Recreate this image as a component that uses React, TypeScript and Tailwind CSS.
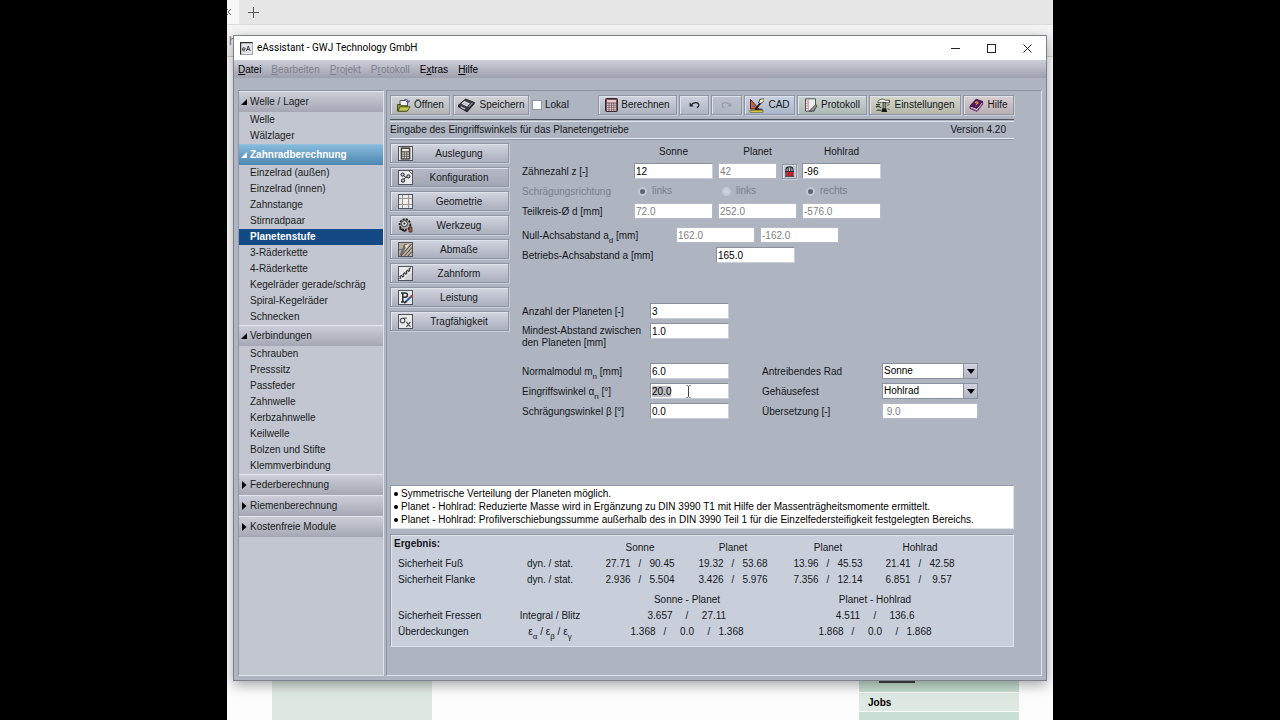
import type { ReactNode } from 'react'
import clsx from 'clsx'

const bevel = 'border border-[#8f95a3] shadow-[inset_1px_1px_0_#dfe3ec,1px_1px_0_#c9cedb]'

/* ---------- toolbar icons ---------- */

function OpenIcon() {
  return (
    <svg width="15" height="15" viewBox="0 0 15 15">
      <path d="M4 2.5h5.5l2 2V10H4z" fill="#eef0f4" stroke="#30343c" strokeWidth=".8" />
      <path d="M1.5 6.5h3l1 1.2H11V13H1.5z" fill="#8a8d2e" stroke="#2f310c" strokeWidth=".8" />
      <path d="M1.7 13.2l2.6-4.4h9.8l-2.8 4.4z" fill="#c3c658" stroke="#3a3c10" strokeWidth=".8" />
      <path d="M8 2.2c1.6-1.6 3.8-1 4.4 1.3M11 3l1.5 1.3L13.7 2.6" fill="none" stroke="#2f3bb0" strokeWidth="1" />
    </svg>
  )
}

function SaveIcon() {
  return (
    <svg width="19" height="15" viewBox="0 0 19 15">
      <path d="M1 7.5L8.5 1l9 3.5L10 13.5z" fill="#3b3d45" stroke="#15161a" strokeWidth=".8" />
      <path d="M1 7.5v1.6l9 5.2 7.5-8.4V4.5L10 13z" fill="#1c1d22" />
      <path d="M7.2 3l5.6 2.4-2.8 3-5.6-2.6z" fill="#f2f3f5" />
      <path d="M6.6 4.4l5 2.2M5.8 5.2l5 2.2" stroke="#8f929b" strokeWidth=".6" />
      <path d="M4 8.2l4.4 2.4-1 1.1-4.2-2.4z" fill="#b9bcc6" />
      <path d="M14.8 4.6l1.2.5-3.6 4-1.2-.6z" fill="#84868f" />
    </svg>
  )
}

function CalculatorIcon() {
  return (
    <svg width="13" height="14" viewBox="0 0 13 14">
      <rect x=".5" y=".5" width="12" height="13" rx="1" fill="#6d5158" stroke="#3a2a30" />
      <rect x="2" y="2" width="9" height="2.5" fill="#e9c9cd" />
      {[5.5, 7.6, 9.7, 11.5].map(y =>
        [2, 4.4, 6.8, 9.2].map(x => <rect key={`${x}-${y}`} x={x} y={y} width="1.6" height="1.3" fill="#f3dfe2" />)
      )}
    </svg>
  )
}

function UndoIcon({ flip = false, color }: { flip?: boolean; color: string }) {
  return (
    <svg width="11" height="8" viewBox="0 0 11 8" className={flip ? '-scale-x-100' : ''}>
      <path d="M2 4.2C4 1 9.5.6 9.8 4c.1 1.4-.8 2.2-2 2.6" fill="none" stroke={color} strokeWidth="1.2" />
      <path d="M.6 1.2v4.4h4.2z" fill={color} />
    </svg>
  )
}

function CadIcon() {
  return (
    <svg width="16" height="15" viewBox="0 0 16 15">
      <path d="M1.5 1.5V11h8.5z" fill="#d9652b" stroke="#5a1c10" strokeWidth="1" />
      <path d="M3.2 6v3h3z" fill="#5d6bb4" />
      <path d="M1 12.3h13v2H1z" fill="#e8dc3e" stroke="#4a4210" strokeWidth=".6" />
      <path d="M6.5 11L12 4.5" stroke="#14151a" strokeWidth="1.8" />
      <path d="M9.5 4.8L11 1.2l3.6-.4-.2 2.4-2.6 2.6z" fill="#f1efd2" stroke="#1a1b20" strokeWidth=".8" />
      <path d="M12.6.8l2.4 1.6" stroke="#e0c93a" strokeWidth="1.2" />
      <path d="M6 11.2h7.5" fill="none" stroke="#14151a" strokeWidth="1" />
    </svg>
  )
}

function NotebookIcon() {
  return (
    <svg width="14" height="14" viewBox="0 0 14 14">
      <path d="M1.5.8h10v8.6l-4 3.8h-6z" fill="#e7efe9" stroke="#4d565a" />
      <path d="M4.2 1v12" stroke="#e07a92" />
      <path d="M2.4 3h1M2.4 5.5h1M2.4 8h1M2.4 10.5h1" stroke="#c34b6c" />
      <path d="M5.5 13l6.2-6.4 1.2 1.2-3 5.4z" fill="#8d969b" stroke="#2b3034" strokeWidth=".8" />
    </svg>
  )
}

function ToolsIcon() {
  return (
    <svg width="16" height="15" viewBox="0 0 16 15">
      <path d="M3 3.2C5 .6 9 .8 10 2.2h4.5v2.6H10.5L9 4.4H6.4L3 5z" fill="#f2f2ea" stroke="#34352c" strokeWidth=".8" />
      <path d="M8 4.6h2.6V11H8z" fill="#8d8e82" stroke="#222" strokeWidth=".6" />
      <path d="M7 10.6h4.2l1 3.4H6.4z" fill="#17181a" />
      <path d="M1 6.6h4M1 9.2c2-1.6 3.6-.6 5 .6M1.5 12.6c1.6-1 3-.8 4.4 0" fill="none" stroke="#33342e" strokeWidth="1.1" />
      <path d="M12 7.5l2.4-1M12.6 10.6l2 1" stroke="#55564c" />
    </svg>
  )
}

function BookIcon() {
  return (
    <svg width="15" height="14" viewBox="0 0 15 14">
      <path d="M1 8L7 1.2l6.5 2.2-5.6 7z" fill="#5a1668" stroke="#250a2e" strokeWidth=".8" />
      <path d="M1 8v2.4l7 3 5.8-7.4-.3-2.6-5.6 7z" fill="#f0e6f1" stroke="#250a2e" strokeWidth=".8" />
      <path d="M1.2 9.6l6.8 2.8 5.6-7.2" fill="none" stroke="#7d2d8a" strokeWidth=".7" />
      <path d="M6.2 5c.4-1.6 3-1.4 2.6 0-.2.8-1.4.8-1.6 1.8M6.7 8v.6" fill="none" stroke="#f4a43a" strokeWidth="1.1" />
    </svg>
  )
}

/* ---------- module icons ---------- */

function IconFrame({ children }: { children: ReactNode }) {
  return (
    <svg width="15" height="15" viewBox="0 0 15 15" className="shrink-0">
      <rect x=".5" y=".5" width="14" height="14" fill="#e9eaec" stroke="#50555f" />
      {children}
    </svg>
  )
}

const designIcon = (
  <IconFrame>
    <rect x="3" y="1.8" width="9" height="11.4" fill="#54504c" stroke="#2d2a28" strokeWidth=".6" />
    <rect x="4.2" y="3" width="6.6" height="2.2" fill="#efe9df" />
    {[6.4, 8.6, 10.8].map(y => [4.2, 6.7, 9.2].map(x => <rect key={`${x}-${y}`} x={x} y={y} width="1.6" height="1.4" fill="#e9e2d6" />))}
  </IconFrame>
)

const configIcon = (
  <IconFrame>
    <path d="M11 1l3 3" stroke="#50555f" />
    <circle cx="4.6" cy="4.6" r="1.6" fill="#b9bdc2" stroke="#23262b" />
    <circle cx="10.4" cy="6.4" r="1.6" fill="#b9bdc2" stroke="#23262b" />
    <circle cx="5" cy="10.6" r="1.7" fill="#b9bdc2" stroke="#23262b" />
    <path d="M6 5.8l1.6 1.6 1.4-.4M7.6 7.4L6.2 9.2" fill="none" stroke="#23262b" />
  </IconFrame>
)

const geometryIcon = (
  <IconFrame>
    <path d="M4.5 1v13M10.5 1v13M1 4.5h13M1 10.5h13" stroke="#9a948c" />
    <rect x="5" y="5" width="5" height="5" fill="#f6f1ea" />
  </IconFrame>
)

const toolIcon = (
  <svg width="15" height="15" viewBox="0 0 15 15" className="shrink-0">
    <circle cx="7" cy="6.6" r="5.4" fill="#a9a7a4" stroke="#1e1e20" strokeWidth="1.8" strokeDasharray="2 1.2" />
    <circle cx="6.4" cy="5.6" r="3" fill="#dcdad6" stroke="#3a3a3d" />
    <circle cx="6.4" cy="5.6" r="1" fill="#26262a" />
    <path d="M1.5 10.5l6 3" stroke="#202024" strokeWidth="1.4" />
    <path d="M11 9h3v5h-3z" fill="#a05a4a" stroke="#3c1b16" strokeWidth=".7" />
  </svg>
)

const allowanceIcon = (
  <IconFrame>
    <rect x="1" y="1" width="13" height="13" fill="#b9b0a2" />
    <path d="M1.5 13.5L6 2h3L4 13.5z" fill="#756b60" />
    <path d="M3 14L13.5 2M6.5 14L14 5.5M10 14l4-4.5" stroke="#494541" />
    <path d="M7 3.2l4-.8-3 4.2z" fill="#ece5d8" />
    <path d="M1 7.5h3" stroke="#5f7fa8" strokeWidth="1.4" />
  </IconFrame>
)

const toothIcon = (
  <IconFrame>
    <path
      d="M1.5 12.5l1-.4-.4-1.8 1.5-.8 1 1.3 1.2-.8-.6-1.7L6.6 7l1.2 1.2 1-1-.6-1.6 1.2-1.2 1.4.9.9-1.1-.6-1.2 1.6-1.2"
      fill="none"
      stroke="#44474d"
      strokeWidth="1.3"
    />
    <path d="M6.5 14c.6-3.4 3-6 7.5-7v7z" fill="#d3d5da" />
  </IconFrame>
)

const powerIcon = (
  <IconFrame>
    <path d="M3 3h4.2c3 0 3 4.2 0 4.2H5.4M4.8 3v9M3 12h3.6" fill="none" stroke="#2b2e33" strokeWidth="1.5" />
    <path d="M7.6 12L13 6.6" stroke="#2f6aa8" strokeWidth="2.2" />
    <path d="M12.4 7.2l1.8-1.8" stroke="#c23a3a" strokeWidth="2.2" />
    <path d="M6.4 13.2l1.6-1.6" stroke="#151619" strokeWidth="1.4" />
  </IconFrame>
)

const loadIcon = (
  <IconFrame>
    <circle cx="4.6" cy="6.6" r="2.3" fill="none" stroke="#4b4e55" strokeWidth="1.1" />
    <path d="M4.4 4.2h4.4" stroke="#4b4e55" strokeWidth="1.1" />
    <path d="M8.4 7.8l4 5M12.4 7.8l-4 5" stroke="#4b4e55" strokeWidth="1.1" />
  </IconFrame>
)

/* ---------- browser behind the window ---------- */

function BrowserBackdrop() {
  return (
    <div className="flex h-full flex-col bg-[#fdfdfd]">
      <div className="flex h-[25px] border-b border-[#dcdcdc] bg-[#e6e6e6]">
        <div className="flex w-[12px] items-center bg-[#f7f7f7]">
          <svg width="5" height="8" viewBox="0 0 5 8">
            <path d="M0 1l1 1M0 7l1-1M4 1L1 4l3 3" fill="none" stroke="#555" />
          </svg>
        </div>
        <svg width="11" height="11" viewBox="0 0 11 11" className="ml-[9px] mt-[7px]">
          <path d="M5.5 0v11M0 5.5h11" stroke="#555" />
        </svg>
      </div>
      <div className="h-[32px] border-b border-[#d0d0d0] bg-[#f4f4f4] pl-[2px] pt-[10px] text-[12px] text-[#777]">h</div>
      <div className="flex flex-1 justify-between pl-[45px] pr-[34px]">
        <div className="w-[160px] bg-[#dfe9e3]" />
        <div className="flex w-[160px] flex-col justify-end">
          <div className="h-[40px] bg-[#c8dfd3] px-[20px] pt-[29px]">
            <div className="h-[2px] w-[36px] bg-[#444]" />
          </div>
          <a href="#jobs" className="mt-px flex h-[18px] items-center bg-[#dfe9e3] px-[9px] pt-[2px] font-bold text-black">Jobs</a>
          <div className="mt-px h-[8px] bg-[#c8dfd3]" />
        </div>
      </div>
    </div>
  )
}

/* ---------- window frame ---------- */

function TitleBar() {
  return (
    <div className="flex h-[24px] items-center bg-white pl-[6px] pr-px font-[Roboto,sans-serif] text-[10px]">
      <svg width="13" height="13" viewBox="0 0 13 13">
        <rect x=".5" y=".5" width="12" height="12" fill="#e4e5ea" stroke="#a3a6ad" />
        <path d="M.5 12.5V.5h12" fill="none" stroke="#2c2d31" strokeWidth="1.4" />
        <path d="M2.5 7.2h2.6c0-2.4-2.6-2.2-2.6 0s1.8 2 2.6 1.2M6.4 9l1.9-5 1.9 5M7 7.4h2.6" fill="none" stroke="#2c2d31" strokeWidth=".9" />
      </svg>
      <span className="ml-[4px] text-black">eAssistant - GWJ Technology GmbH</span>
      <div className="ml-auto flex">
        <button aria-label="Minimieren" className="flex h-[24px] w-[36px] items-center justify-center">
          <svg width="9" height="9" viewBox="0 0 9 9"><path d="M0 4.5h9" stroke="#222" /></svg>
        </button>
        <button aria-label="Maximieren" className="flex h-[24px] w-[36px] items-center justify-center">
          <svg width="9" height="9" viewBox="0 0 9 9"><rect x=".5" y=".5" width="8" height="8" fill="none" stroke="#222" /></svg>
        </button>
        <button aria-label="Schließen" className="flex h-[24px] w-[36px] items-center justify-center">
          <svg width="9" height="9" viewBox="0 0 9 9"><path d="M.5.5l8 8M8.5.5l-8 8" stroke="#222" /></svg>
        </button>
      </div>
    </div>
  )
}

function MenuBar() {
  const items = [
    { pre: '', key: 'D', rest: 'atei', disabled: false },
    { pre: '', key: 'B', rest: 'earbeiten', disabled: true },
    { pre: '', key: 'P', rest: 'rojekt', disabled: true },
    { pre: 'P', key: 'r', rest: 'otokoll', disabled: true },
    { pre: 'E', key: 'x', rest: 'tras', disabled: false },
    { pre: '', key: 'H', rest: 'ilfe', disabled: false },
  ]
  return (
    <div className="flex h-[18px] items-center gap-[10px] bg-linear-to-b from-[#cdcfda] to-[#9da1ad] px-[4px] pt-px">
      {items.map(m => (
        <button key={m.rest} disabled={m.disabled} className="text-black disabled:text-[#7c808b]">
          {m.pre}<u>{m.key}</u>{m.rest}
        </button>
      ))}
    </div>
  )
}

/* ---------- module tree ---------- */

const tree = [
  { title: 'Welle / Lager', items: ['Welle', 'Wälzlager'] },
  {
    title: 'Zahnradberechnung',
    items: [
      'Einzelrad (außen)', 'Einzelrad (innen)', 'Zahnstange', 'Stirnradpaar', 'Planetenstufe',
      '3-Räderkette', '4-Räderkette', 'Kegelräder gerade/schräg', 'Spiral-Kegelräder', 'Schnecken',
    ],
  },
  {
    title: 'Verbindungen',
    items: ['Schrauben', 'Presssitz', 'Passfeder', 'Zahnwelle', 'Kerbzahnwelle', 'Keilwelle', 'Bolzen und Stifte', 'Klemmverbindung'],
  },
  { title: 'Federberechnung', items: [] },
  { title: 'Riemenberechnung', items: [] },
  { title: 'Kostenfreie Module', items: [] },
]

function Sidebar() {
  return (
    <nav className="w-[146px] shrink-0 border border-[#8f95a3] border-b-[#dfe3ec] border-r-[#dfe3ec] bg-[#c2c6d0]">
      {tree.map(group => {
        const active = group.title === 'Zahnradberechnung'
        return (
          <div key={group.title}>
            <button
              className={clsx(
                'flex h-[21px] w-full items-center gap-[3px] border-t pl-[2px] text-left',
                active
                  ? 'border-[#8fc0de] bg-linear-to-b from-[#86bbdb] to-[#4d87b0] font-bold text-white'
                  : 'border-[#e3e6ee] bg-linear-to-b from-[#cbced8] to-[#a4a8b4] text-[#1a1c22]'
              )}
            >
              <svg width="6" height="8" viewBox="0 0 6 8" fill={active ? '#fff' : '#000'}>
                {group.items.length ? <path d="M6 1v6H0z" /> : <path d="M1 0l4.5 4L1 8z" />}
              </svg>
              {group.title}
            </button>
            {group.items.map(item => (
              <a
                key={item}
                href="#modul"
                className={clsx(
                  'block h-[16px] whitespace-nowrap pl-[11px] leading-[16px]',
                  item === 'Planetenstufe' ? 'bg-[#134a86] font-bold text-white' : 'text-[#1a1c22]'
                )}
              >
                {item}
              </a>
            ))}
          </div>
        )
      })}
    </nav>
  )
}

/* ---------- toolbar ---------- */

function ToolButton({ className, children, ...rest }: { className: string; children: ReactNode; disabled?: boolean; 'aria-label'?: string }) {
  return (
    <button {...rest} className={clsx('flex h-[20px] items-center justify-center gap-[3px] bg-linear-to-b', bevel, className)}>
      {children}
    </button>
  )
}

function Toolbar() {
  return (
    <div className="flex items-center justify-between">
      <div className="flex items-center gap-[3px]">
        <ToolButton className="w-[60px] from-[#d3d4d6] to-[#b3b4b4]"><OpenIcon />Öffnen</ToolButton>
        <ToolButton className="w-[76px] from-[#d3d4d8] to-[#b3b4ba]"><SaveIcon />Speichern</ToolButton>
        <label className="flex items-center gap-[3px]">
          <input type="checkbox" className="size-[10px] appearance-none border border-[#8f95a3] bg-white" />
          Lokal
        </label>
      </div>
      <div className="flex gap-[2px]">
        <ToolButton className="w-[79px] from-[#d0d4df] to-[#adb2be]"><CalculatorIcon />Berechnen</ToolButton>
        <ToolButton aria-label="Rückgängig" className="w-[30px] from-[#cdd2de] to-[#b0b5c2]"><UndoIcon color="#22252b" /></ToolButton>
        <ToolButton aria-label="Wiederholen" disabled className="w-[31px] from-[#bcc1cd] to-[#b0b5c2]"><UndoIcon flip color="#979dab" /></ToolButton>
        <ToolButton className="w-[51px] from-[#c9d2e4] to-[#acb6ca]"><CadIcon />CAD</ToolButton>
        <ToolButton className="w-[70px] from-[#cbd6d4] to-[#adb8b4]"><NotebookIcon />Protokoll</ToolButton>
        <ToolButton className="w-[92px] from-[#d5d8cc] to-[#b5b8a8]"><ToolsIcon />Einstellungen</ToolButton>
        <ToolButton className="w-[51px] from-[#d9cfd1] to-[#b9afb3]"><BookIcon />Hilfe</ToolButton>
      </div>
    </div>
  )
}

/* ---------- module buttons ---------- */

const modules = [
  { label: 'Auslegung', icon: designIcon },
  { label: 'Konfiguration', icon: configIcon },
  { label: 'Geometrie', icon: geometryIcon },
  { label: 'Werkzeug', icon: toolIcon },
  { label: 'Abmaße', icon: allowanceIcon },
  { label: 'Zahnform', icon: toothIcon },
  { label: 'Leistung', icon: powerIcon },
  { label: 'Tragfähigkeit', icon: loadIcon },
]

function ModuleButtons() {
  return (
    <div className="flex w-[119px] shrink-0 flex-col gap-[4px] pt-[2px]">
      {modules.map(m => (
        <button
          key={m.label}
          className={clsx(
            'flex h-[20px] items-center bg-linear-to-b pl-[7px] pr-[9px]',
            bevel,
            m.label === 'Konfiguration' ? 'from-[#b4b9c5] to-[#a3a7b3]' : 'from-[#d2d6e1] to-[#abafbb]'
          )}
        >
          {m.icon}
          <span className="flex-1 pl-[6px] pt-[2px] text-center">{m.label}</span>
        </button>
      ))}
    </div>
  )
}

/* ---------- input form ---------- */

function Field({ id, value, width = 'w-[79px]', disabled, label, focus }: {
  id: string
  value: string
  width?: string
  disabled?: boolean
  label?: string
  focus?: boolean
}) {
  return (
    <input
      id={id}
      aria-label={label}
      defaultValue={value}
      disabled={disabled}
      autoFocus={focus}
      onFocus={focus ? e => e.target.select() : undefined}
      className={clsx(
        'h-[16px] border border-[#8a909d] border-b-[#c9cedb] border-r-[#c9cedb] bg-white pl-px text-black outline-none selection:bg-[#bdbdc1] selection:text-black disabled:border-[#b4b9c5] disabled:text-[#808080]',
        width
      )}
    />
  )
}

function Row({ children, className }: { children: ReactNode; className?: string }) {
  return <div className={clsx('flex h-[20px] items-center gap-[5px]', className)}>{children}</div>
}

function Label({ htmlFor, width, children }: { htmlFor: string; width: string; children: ReactNode }) {
  return <label htmlFor={htmlFor} className={clsx('shrink-0 whitespace-nowrap pt-[2px]', width)}>{children}</label>
}

function Sub({ children }: { children: ReactNode }) {
  return <sub className="-bottom-[4px] text-[8px]">{children}</sub>
}

function HelixRadio({ name, label, checked }: { name: string; label: string; checked?: boolean }) {
  return (
    <label className="flex w-[79px] items-center gap-[5px] pl-[4px] text-[#7c808b]">
      <input
        type="radio"
        name={name}
        defaultChecked={checked}
        disabled
        className="size-[9px] appearance-none rounded-full border-2 border-[#c3c8d3] bg-[#ccd0da] checked:bg-[#5f646e]"
      />
      {label}
    </label>
  )
}

function Choice({ id, value, options }: { id: string; value: string; options: string[] }) {
  return (
    <div className="relative w-[96px]">
      <select id={id} defaultValue={value} className="block h-[16px] w-full appearance-none border border-[#8a909d] bg-white pl-px text-black">
        {options.map(o => <option key={o}>{o}</option>)}
      </select>
      <span className="pointer-events-none absolute right-0 top-0 flex h-[16px] w-[15px] items-center justify-center border border-[#8a909d] bg-linear-to-b from-[#d0d4df] to-[#b0b5c1]">
        <svg width="8" height="5" viewBox="0 0 8 5"><path d="M0 0h8L4 5z" /></svg>
      </span>
    </div>
  )
}

function GearForm() {
  return (
    <form className="min-w-0 flex-1">
      <Row className="pl-[112px] pt-[2px] text-center">
        <span className="w-[79px]">Sonne</span>
        <span className="w-[79px]">Planet</span>
        <span className="w-[79px]">Hohlrad</span>
      </Row>
      <Row>
        <Label htmlFor="z1" width="w-[107px]">Zähnezahl z [-]</Label>
        <Field id="z1" value="12" />
        <Field id="z2" value="42" width="w-[59px]" label="Zähnezahl Planet" disabled />
        <button type="button" aria-label="Sperren" className={clsx('flex size-[15px] items-center justify-center bg-[#c6cbd6]', bevel)}>
          <svg width="11" height="11" viewBox="0 0 11 11">
            <path d="M2 10V3.4C2 0 9 0 9 3.4V10M4.2 2v4M6.8 2v4" fill="none" stroke="#2a2c31" strokeWidth="1.2" />
            <path d="M1 5.6h9" stroke="#2a2c31" />
            <rect x="2.6" y="6" width="6.6" height="4.2" fill="#c81e2e" />
            <path d="M1 10.4h9.2" stroke="#2a2c31" strokeWidth=".8" />
          </svg>
        </button>
        <Field id="z3" value="-96" label="Zähnezahl Hohlrad" />
      </Row>
      <Row>
        <span className="w-[107px] pt-[2px] text-[#7c808b]">Schrägungsrichtung</span>
        <HelixRadio name="h1" label="links" checked />
        <HelixRadio name="h2" label="links" />
        <HelixRadio name="h3" label="rechts" checked />
      </Row>
      <Row>
        <Label htmlFor="d1" width="w-[107px]">Teilkreis-Ø d [mm]</Label>
        <Field id="d1" value="72.0" disabled />
        <Field id="d2" value="252.0" label="Teilkreis Planet" disabled />
        <Field id="d3" value="-576.0" label="Teilkreis Hohlrad" disabled />
      </Row>
      <Row className="mt-[4px]">
        <Label htmlFor="ad1" width="w-[149px]">Null-Achsabstand a<Sub>d</Sub> [mm]</Label>
        <Field id="ad1" value="162.0" disabled />
        <Field id="ad2" value="-162.0" label="Null-Achsabstand Hohlrad" disabled />
      </Row>
      <Row>
        <Label htmlFor="a" width="w-[189px]">Betriebs-Achsabstand a [mm]</Label>
        <Field id="a" value="165.0" />
      </Row>

      <Row className="mt-[36px]">
        <Label htmlFor="planets" width="w-[123px]">Anzahl der Planeten [-]</Label>
        <Field id="planets" value="3" />
      </Row>
      <div className="flex h-[40px] items-start gap-[5px] pt-[2px]">
        <Label htmlFor="gap" width="w-[123px]">
          <span className="block">Mindest-Abstand zwischen</span>
          <span className="block">den Planeten [mm]</span>
        </Label>
        <Field id="gap" value="1.0" />
      </div>

      <div className="flex gap-[33px]">
        <div>
          <Row>
            <Label htmlFor="mn" width="w-[123px]">Normalmodul m<Sub>n</Sub> [mm]</Label>
            <Field id="mn" value="6.0" />
          </Row>
          <Row className="relative">
            <Label htmlFor="alpha" width="w-[123px]">Eingriffswinkel α<Sub>n</Sub> [°]</Label>
            <Field id="alpha" value="20.0" focus />
            <svg width="7" height="13" viewBox="0 0 7 13" className="absolute right-[37px] top-[4px]">
              <path d="M1.5.5h1l1 1 1-1h1M3.5 1.5v10M1.5 12.5h1l1-1 1 1h1" fill="none" stroke="#444" />
            </svg>
          </Row>
          <Row>
            <Label htmlFor="beta" width="w-[123px]">Schrägungswinkel β [°]</Label>
            <Field id="beta" value="0.0" />
          </Row>
        </div>
        <div>
          <Row>
            <Label htmlFor="drive" width="w-[115px]">Antreibendes Rad</Label>
            <Choice id="drive" value="Sonne" options={['Sonne', 'Planet', 'Hohlrad']} />
          </Row>
          <Row>
            <Label htmlFor="fixed" width="w-[115px]">Gehäusefest</Label>
            <Choice id="fixed" value="Hohlrad" options={['Sonne', 'Planet', 'Hohlrad']} />
          </Row>
          <Row>
            <Label htmlFor="ratio" width="w-[115px]">Übersetzung [-]</Label>
            <Field id="ratio" value=" 9.0" width="w-[96px]" disabled />
          </Row>
        </div>
      </div>
    </form>
  )
}

/* ---------- messages and results ---------- */

const messages = [
  'Symmetrische Verteilung der Planeten möglich.',
  'Planet - Hohlrad: Reduzierte Masse wird in Ergänzung zu DIN 3990 T1 mit Hilfe der Massenträgheitsmomente ermittelt.',
  'Planet - Hohlrad: Profilverschiebungssumme außerhalb des in DIN 3990 Teil 1 für die Einzelfedersteifigkeit festgelegten Bereichs.',
]

function Messages() {
  return (
    <ul className="h-[44px] border border-[#9298a6] border-b-[#dfe3ec] border-r-[#dfe3ec] bg-white pl-[3px] pt-px leading-[13px] text-black">
      {messages.map(m => (
        <li key={m} className="flex items-center gap-[3px] whitespace-nowrap">
          <span className="size-[4px] rounded-full bg-black" />
          {m}
        </li>
      ))}
    </ul>
  )
}

function Pair({ a, b, wide }: { a: string; b: string; wide?: boolean }) {
  return (
    <div className={clsx('grid justify-center text-center', wide ? 'grid-cols-[26px_28px_26px]' : 'grid-cols-[26px_18px_26px]')}>
      <span>{a}</span><span>/</span><span>{b}</span>
    </div>
  )
}

function Triple({ values }: { values: [string, string, string] }) {
  return (
    <div className="grid grid-cols-[26px_18px_26px_18px_26px] justify-center text-center">
      <span>{values[0]}</span><span>/</span><span>{values[1]}</span><span>/</span><span>{values[2]}</span>
    </div>
  )
}

const safety = [
  { label: 'Sicherheit Fuß', values: [['27.71', '90.45'], ['19.32', '53.68'], ['13.96', '45.53'], ['21.41', '42.58']] },
  { label: 'Sicherheit Flanke', values: [['2.936', '5.504'], ['3.426', '5.976'], ['7.356', '12.14'], ['6.851', '9.57']] },
]

function Results() {
  return (
    <div className="mt-[5px] border border-[#9298a6] border-b-[#dfe3ec] border-r-[#dfe3ec] bg-[#c8cfdb] pb-[6px] pt-px shadow-[inset_1px_1px_0_#dfe3ec]">
      <table className="w-full table-fixed leading-[16px]">
        <colgroup>
          <col className="w-[115px]" />
          <col className="w-[88px]" />
          <col className="w-[92px]" />
          <col className="w-[94px]" />
          <col className="w-[96px]" />
          <col className="w-[88px]" />
          <col />
        </colgroup>
        <tbody>
          <tr className="h-[20px] align-bottom">
            <th className="pl-[3px] text-left align-top font-bold">Ergebnis:</th>
            <td />
            <th className="font-normal">Sonne</th>
            <th className="font-normal">Planet</th>
            <th className="font-normal">Planet</th>
            <th className="font-normal">Hohlrad</th>
          </tr>
          {safety.map(row => (
            <tr key={row.label}>
              <th className="pl-[7px] text-left font-normal">{row.label}</th>
              <td className="text-center">dyn. / stat.</td>
              {row.values.map(([a, b]) => <td key={a}><Pair a={a} b={b} /></td>)}
            </tr>
          ))}
          <tr className="h-[20px] align-bottom">
            <td />
            <td />
            <th colSpan={2} className="font-normal">Sonne - Planet</th>
            <th colSpan={2} className="pl-[6px] font-normal">Planet - Hohlrad</th>
          </tr>
          <tr>
            <th className="pl-[7px] text-left font-normal">Sicherheit Fressen</th>
            <td className="text-center">Integral / Blitz</td>
            <td colSpan={2}><Pair a="3.657" b="27.11" wide /></td>
            <td colSpan={2} className="pl-[6px]"><Pair a="4.511" b="136.6" wide /></td>
          </tr>
          <tr className="h-[16px]">
            <th className="pl-[7px] text-left font-normal">Überdeckungen</th>
            <td className="text-center">ε<Sub>α</Sub> / ε<Sub>β</Sub> / ε<Sub>γ</Sub></td>
            <td colSpan={2}><Triple values={['1.368', '0.0', '1.368']} /></td>
            <td colSpan={2} className="pl-[6px]"><Triple values={['1.868', '0.0', '1.868']} /></td>
          </tr>
        </tbody>
      </table>
    </div>
  )
}

function MainPanel() {
  return (
    <main className="min-w-0 flex-1 border border-[#8f95a3] border-b-[#dfe3ec] border-r-[#dfe3ec] pb-[28px] pl-[3px] pr-[27px] pt-[4px]">
      <Toolbar />
      <div className="mt-[4px] border-t border-[#50555f] pt-px">
        <div className="flex h-[17px] items-center justify-between border-t border-[#dfe3ec] pr-[8px]">
          <span>Eingabe des Eingriffswinkels für das Planetengetriebe</span>
          <span>Version 4.20</span>
        </div>
      </div>
      <div className="border-b border-t border-b-[#8f95a3] border-t-[#eceff5]" />
      <div className="flex gap-[13px] pt-px">
        <ModuleButtons />
        <GearForm />
      </div>
      <div className="pt-[64px]">
        <Messages />
        <Results />
      </div>
    </main>
  )
}

export default function App() {
  return (
    <div className="h-screen bg-black px-[227px] font-['Liberation_Sans',Arial,sans-serif] text-[10px] leading-[12px] text-[#15171c]">
      <div className="relative h-full overflow-hidden">
        <BrowserBackdrop />
        <div className="absolute inset-x-[6px] top-[35px] border border-[#7d818b] bg-[#aeb4c0] shadow-[0_4px_12px_rgba(0,0,0,0.35)]">
          <TitleBar />
          <MenuBar />
          <div className="flex gap-[2px] px-[4px] pb-[4px] pt-[12px]">
            <Sidebar />
            <MainPanel />
          </div>
        </div>
      </div>
    </div>
  )
}
